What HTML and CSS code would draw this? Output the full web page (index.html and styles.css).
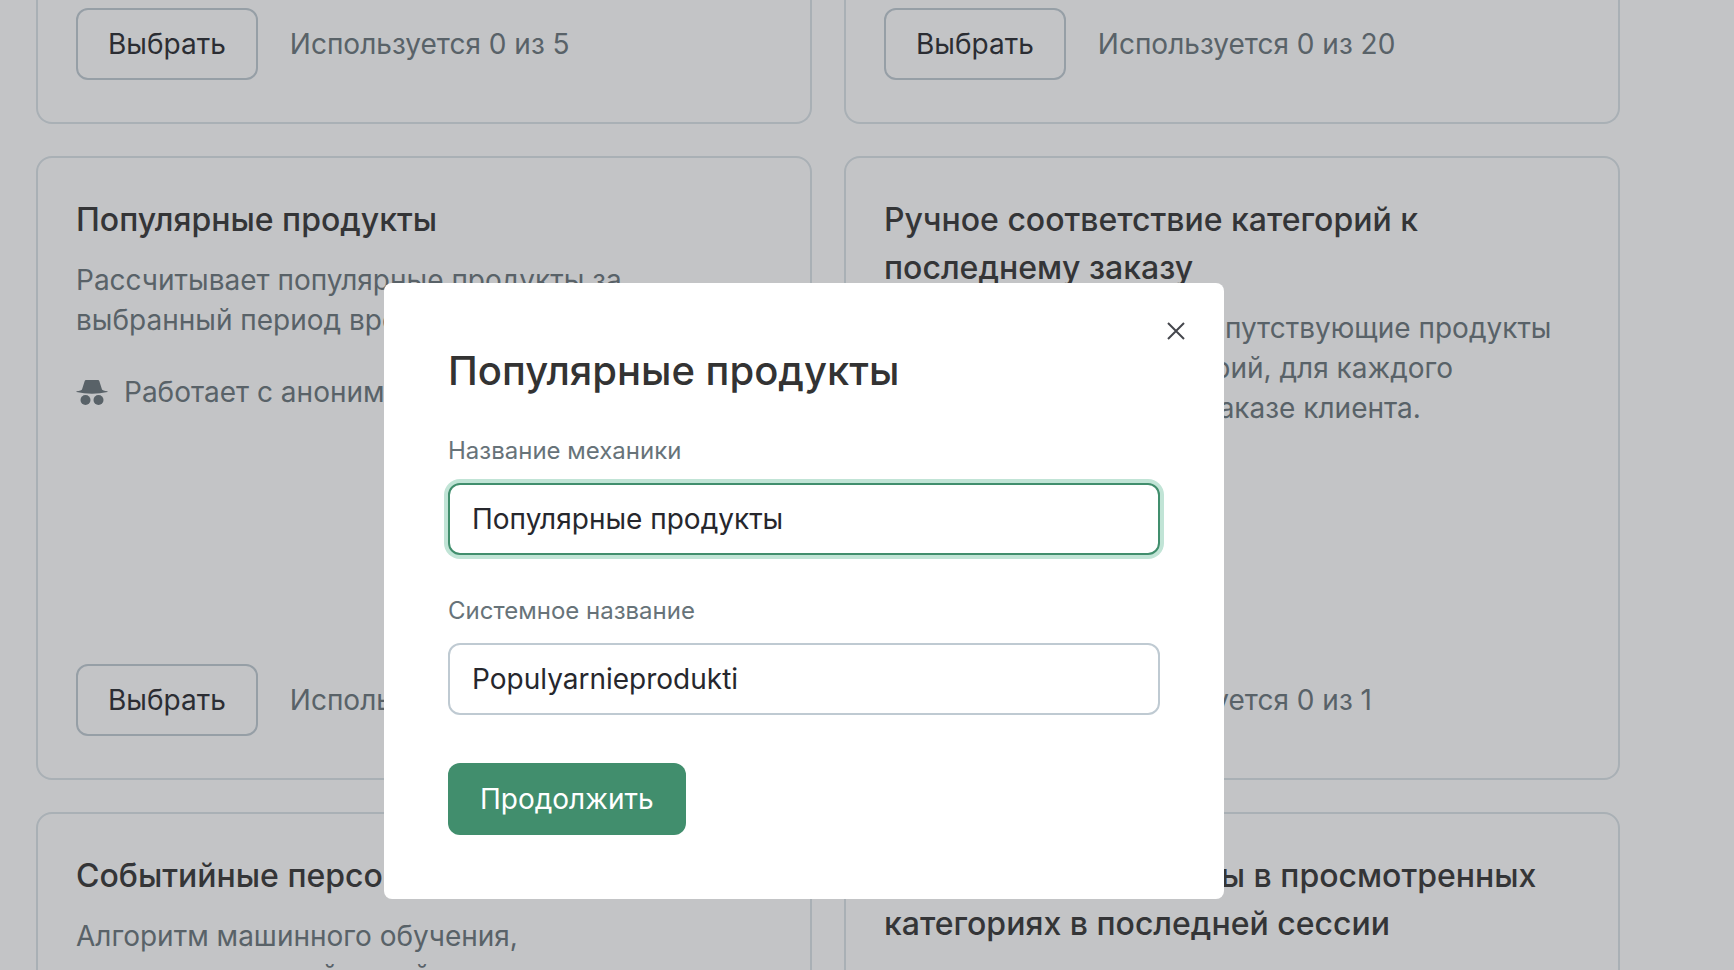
FILE: index.html
```html
<!DOCTYPE html>
<html lang="ru">
<head>
<meta charset="utf-8">
<title>Механики рекомендаций</title>
<link rel="stylesheet" href="styles.css">
</head>
<body>
<main class="page">
  <div class="grid">
    <article class="card card-first">
      <div class="card-footer">
        <button class="btn btn-outline" type="button">Выбрать</button>
        <span class="usage">Используется 0 из 5</span>
      </div>
    </article>
    <article class="card card-first">
      <div class="card-footer">
        <button class="btn btn-outline" type="button">Выбрать</button>
        <span class="usage">Используется 0 из 20</span>
      </div>
    </article>
    <article class="card card-tall">
      <h2 class="card-title">Популярные продукты</h2>
      <p class="card-text">Рассчитывает популярные продукты за<br>выбранный период времени.</p>
      <p class="card-note">
        <svg class="note-icon" viewBox="0 0 32 32" aria-hidden="true">
          <path d="M10 4h12q1 0 1.300 1l2.700 8.500q.5 1.200 5.500 1.700v.8q-7.500 1.800-15.500 1.800t-15.500-1.800v-.8q5-.5 5.500-1.700l2.700-8.500q.3-1 1.300-1z"/>
          <circle cx="9.500" cy="24" r="5"/>
          <circle cx="22.500" cy="24" r="5"/>
        </svg>
        Работает с анонимами
      </p>
      <div class="card-footer">
        <button class="btn btn-outline" type="button">Выбрать</button>
        <span class="usage">Используется 0 из 5</span>
      </div>
    </article>
    <article class="card card-tall">
      <h2 class="card-title">Ручное соответствие категорий к последнему заказу</h2>
      <p class="card-text">Рекомендуем ручные сопутствующие продукты<br>из составленных категорий, для каждого<br>продукта в последнем заказе клиента.</p>
      <div class="card-footer">
        <button class="btn btn-outline" type="button">Выбрать</button>
        <span class="usage">Используется 0 из 1</span>
      </div>
    </article>
    <article class="card card-tall">
      <h2 class="card-title">Событийные персональные</h2>
      <p class="card-text">Алгоритм машинного обучения,<br>для пользователей одной сессии.</p>
    </article>
    <article class="card card-tall">
      <h2 class="card-title">Популярные продукты в просмотренных категориях в последней сессии</h2>
    </article>
  </div>
</main>
<div class="overlay">
  <form class="modal" role="dialog" aria-modal="true" aria-labelledby="modal-title">
    <button class="close" type="button" aria-label="Закрыть">
      <svg class="close-icon" viewBox="0 0 18 18" aria-hidden="true"><path d="M1 1l16 16M17 1L1 17"/></svg>
    </button>
    <h1 class="modal-title" id="modal-title">Популярные продукты</h1>
    <div class="field">
      <label class="label" for="name">Название механики</label>
      <input class="input input-active" id="name" type="text" value="Популярные продукты">
    </div>
    <div class="field">
      <label class="label" for="system-name">Системное название</label>
      <input class="input" id="system-name" type="text" value="Populyarnieprodukti">
    </div>
    <button class="btn btn-primary" type="submit">Продолжить</button>
  </form>
</div>
</body>
</html>
```
FILE: styles.css
```css
* {
  box-sizing: border-box;
}

html,
body {
  height: 100%;
}

body {
  margin: 0;
  overflow: hidden;
  background: #fff;
  color: #333;
  font: 400 28px/40px Inter, "Liberation Sans", sans-serif;
}

h1,
h2,
p {
  margin: 0;
}

.page {
  height: 100vh;
  overflow: hidden;
  padding: 0 114px 0 36px;
}

.grid {
  display: grid;
  grid-template-columns: 1fr 1fr;
  gap: 32px;
}

.card {
  display: flex;
  flex-direction: column;
  padding: 38px 38px 42px;
  border: 2px solid #dae2e7;
  border-radius: 16px;
}

.card-first {
  padding-top: 8px;
  border-top: 0;
  border-radius: 0 0 16px 16px;
}

.card-tall {
  min-height: 624px;
}

.card-title {
  margin-bottom: 16px;
  font-size: 32px;
  font-weight: 500;
  line-height: 48px;
}

.card-text {
  color: #677379;
}

.card-note {
  display: flex;
  align-items: center;
  gap: 16px;
  margin-top: 32px;
  color: #677379;
}

.note-icon {
  width: 32px;
  height: 32px;
  fill: currentColor;
}

.card-footer {
  display: flex;
  align-items: center;
  gap: 32px;
  margin-top: auto;
  color: #677379;
}

.btn {
  height: 72px;
  padding: 0 32px;
  border: 0;
  border-radius: 12px;
  font: inherit;
  cursor: pointer;
}

.btn-outline {
  padding: 0 30px;
  border: 2px solid #bfcad2;
  background: #fff;
  color: #26272d;
}

.btn-primary {
  align-self: flex-start;
  margin-top: 8px;
  background: #418e6d;
  color: #fff;
}

.overlay {
  position: fixed;
  inset: 0;
  display: flex;
  align-items: flex-start;
  justify-content: center;
  padding: 283px 126px 0 0;
  background: rgba(55, 58, 65, 0.3);
}

.modal {
  position: relative;
  display: flex;
  flex-direction: column;
  gap: 40px;
  width: 840px;
  max-width: 100%;
  padding: 64px;
  border-radius: 8px;
  background: #fff;
}

.modal-title {
  font-size: 40px;
  font-weight: 500;
  line-height: 48px;
}

.close {
  position: absolute;
  top: 24px;
  right: 24px;
  display: grid;
  place-items: center;
  width: 48px;
  height: 48px;
  padding: 0;
  border: 0;
  background: none;
  cursor: pointer;
}

.close-icon {
  width: 18px;
  height: 18px;
  fill: none;
  stroke: #44464c;
  stroke-width: 2;
}

.field {
  display: flex;
  flex-direction: column;
  gap: 16px;
}

.label {
  color: #677379;
  font-size: 24px;
  line-height: 32px;
}

.input {
  width: 100%;
  height: 72px;
  padding: 0 22px;
  border: 2px solid #bfcad2;
  border-radius: 12px;
  outline: 0;
  background: #fff;
  color: #26272d;
  font: inherit;
}

.input-active {
  border-color: #418e6d;
  box-shadow: 0 0 0 4px #c1e4d6;
}
```
